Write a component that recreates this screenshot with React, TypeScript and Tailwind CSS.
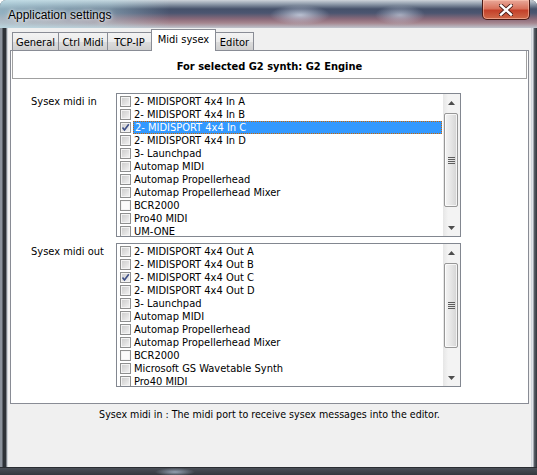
import React from 'react'

const inPorts = [
  '2- MIDISPORT 4x4 In A',
  '2- MIDISPORT 4x4 In B',
  '2- MIDISPORT 4x4 In C',
  '2- MIDISPORT 4x4 In D',
  '3- Launchpad',
  'Automap MIDI',
  'Automap Propellerhead',
  'Automap Propellerhead Mixer',
  'BCR2000',
  'Pro40 MIDI',
  'UM-ONE',
]

const outPorts = [
  '2- MIDISPORT 4x4 Out A',
  '2- MIDISPORT 4x4 Out B',
  '2- MIDISPORT 4x4 Out C',
  '2- MIDISPORT 4x4 Out D',
  '3- Launchpad',
  'Automap MIDI',
  'Automap Propellerhead',
  'Automap Propellerhead Mixer',
  'BCR2000',
  'Microsoft GS Wavetable Synth',
  'Pro40 MIDI',
]

function CheckBox({ checked, light }: { checked: boolean; light: boolean }) {
  return (
    <span
      className={`relative flex h-[11px] w-[11px] shrink-0 items-center justify-center border border-[#8e8f8f] shadow-[inset_0_0_0_1px_#f4f4f4] ${
        light
          ? 'bg-[#fbfbfb]'
          : 'bg-[linear-gradient(135deg,#cbcbcb_0%,#dedede_50%,#f6f6f6_100%)]'
      }`}
    >
      {checked ? (
        <svg viewBox="0 0 9 9" width="9" height="9" aria-hidden="true">
          <path d="M1.5 4.5 L3.5 7 L7.8 1.2" fill="none" stroke="#3d4f86" strokeWidth="1.6" />
        </svg>
      ) : null}
    </span>
  )
}

function Arrow({ up }: { up: boolean }) {
  return (
    <div className="flex h-[17px] items-center justify-center">
      <svg viewBox="0 0 7 4" width="7" height="4" aria-hidden="true">
        <polygon points={up ? '3.5,0 7,4 0,4' : '0,0 7,0 3.5,4'} fill="#4d4d4d" />
      </svg>
    </div>
  )
}

function ScrollBar({ thumb }: { thumb: number }) {
  return (
    <div className="flex w-[17px] shrink-0 flex-col bg-[linear-gradient(to_right,#e6e6e6,#f3f3f3_30%,#f3f3f3)]">
      <Arrow up />
      <div className="flex-1 pl-[1px] pt-[2px]">
        <div
          className={`flex w-[14px] items-center justify-center rounded-[2px] border border-[#979797] bg-[linear-gradient(to_right,#f4f4f4,#e6e6e6_50%,#d4d4d4)] shadow-[inset_0_0_0_1px_rgba(255,255,255,0.7)] ${
            thumb === 94 ? 'h-[94px]' : 'h-[85px]'
          }`}
        >
          <div className="flex flex-col gap-[1px]">
            <span className="block h-[1px] w-[7px] bg-[#5d5d5d]" />
            <span className="block h-[1px] w-[7px] bg-[#5d5d5d]" />
            <span className="block h-[1px] w-[7px] bg-[#5d5d5d]" />
            <span className="block h-[1px] w-[7px] bg-[#5d5d5d]" />
          </div>
        </div>
      </div>
      <Arrow up={false} />
    </div>
  )
}

type PortListProps = {
  items: string[]
  checkedIndex: number
  selectedIndex: number
  thumb: number
}

function PortList({ items, checkedIndex, selectedIndex, thumb }: PortListProps) {
  return (
    <div className="flex h-[144px] w-[345px] border border-[#828790] bg-white">
      <div className="flex-1 overflow-hidden pt-[1px]">
        {items.map((item, i) => (
          <div key={item} className="flex h-[13px] items-center pl-[3px]">
            <CheckBox checked={i === checkedIndex} light={item === 'BCR2000'} />
            <span
              className={`ml-[2px] mr-[1px] flex h-[13px] flex-1 items-center whitespace-nowrap pl-[1px] ${
                i === selectedIndex
                  ? 'border border-dotted border-[#cc6600] bg-[#3399ff] pl-0 text-white'
                  : ''
              }`}
            >
              {item}
            </span>
          </div>
        ))}
      </div>
      <ScrollBar thumb={thumb} />
    </div>
  )
}

function Tab({ label, width, active }: { label: string; width: string; active?: boolean }) {
  if (active) {
    return (
      <div
        className={`relative z-10 -mb-[1px] flex h-[22px] items-start justify-center border border-b-0 border-[#898c95] bg-white pt-[3px] ${width}`}
      >
        {label}
      </div>
    )
  }
  return (
    <div
      className={`flex h-[18px] items-center justify-center border border-b-0 border-[#898c95] bg-[linear-gradient(to_bottom,#f3f3f3,#ebebeb_50%,#dddddd_51%,#cfcfcf)] pt-[1px] ${width}`}
    >
      {label}
    </div>
  )
}

function CloseButton() {
  return (
    <div className="mr-[1px] flex h-[20px] w-[48px] items-center justify-center rounded-b-[5px] border border-t-0 border-[#4a1a14] bg-[linear-gradient(to_bottom,#e9a99a_0%,#d8725c_45%,#c4412a_55%,#cf6a4a_100%)] shadow-[inset_0_0_0_1px_rgba(255,200,180,0.55)]">
      <svg viewBox="0 0 14 12" width="14" height="12" aria-hidden="true">
        <path d="M2 1.5 L12 10.5 M12 1.5 L2 10.5" stroke="#4a1e18" strokeWidth="4.2" strokeLinecap="square" />
        <path d="M2 1.5 L12 10.5 M12 1.5 L2 10.5" stroke="#ffffff" strokeWidth="2.4" strokeLinecap="square" />
      </svg>
    </div>
  )
}

export default function App() {
  return (
    <div className="flex h-[475px] w-[537px] flex-col overflow-hidden rounded-t-[6px] bg-[#3e434a] font-['DejaVu_Sans_Condensed','DejaVu_Sans',sans-serif] text-[11px] leading-[13px] text-black">
      <header className="flex h-[28px] shrink-0 items-start justify-between bg-[radial-gradient(30px_10px_at_300px_15px,rgba(215,225,240,0.75),transparent),radial-gradient(25px_10px_at_400px_15px,rgba(215,225,240,0.6),transparent),linear-gradient(to_right,rgba(185,225,235,0.65)_0px,rgba(185,225,235,0.4)_110px,rgba(185,225,235,0)_170px),linear-gradient(to_bottom,#cdd3da_0px,#909cab_4px,#45516a_9px,#4b5570_13px,#8a6a7a_19px,#a5868f_23px,#bfc4cd_28px)] pl-[8px] pr-[6px]">
        <span className="pt-[8px] font-['Liberation_Sans',Arial,sans-serif] text-[12px] leading-[14px] [text-shadow:0_0_6px_rgba(255,255,255,0.95),0_0_3px_rgba(255,255,255,0.9)]">
          Application settings
        </span>
        <CloseButton />
      </header>

      <div className="flex min-h-0 flex-1">
        <div className="w-[8px] shrink-0 bg-[linear-gradient(to_right,#8b929c_0px,#8b929c_2px,#2e3238_3px,#2e3238_6px,#cfd4da_7px)]" />

        <div className="flex w-[523px] flex-col bg-[#f0f0f0]">
          <div className="flex h-[22px] items-end pl-[4px]">
            <Tab label="General" width="w-[47px]" />
            <Tab label="Ctrl Midi" width="w-[50px] -ml-[1px]" />
            <Tab label="TCP-IP" width="w-[45px] -ml-[1px]" />
            <Tab label="Midi sysex" width="w-[65px] -ml-[1px]" active />
            <Tab label="Editor" width="w-[39px] -ml-[1px]" />
          </div>

          <section className="mx-[2px] flex flex-col border border-[#898c95] bg-white pb-[16px]">
            <div className="mx-[1px] h-[28px] border border-t-0 border-[#a0a0a0] pt-[9px] text-center font-bold">
              For selected G2 synth: G2 Engine
            </div>

            <div className="mt-[14px] flex">
              <div className="w-[105px] pl-[20px] pt-[2px]">Sysex midi in</div>
              <PortList items={inPorts} checkedIndex={2} selectedIndex={2} thumb={94} />
            </div>

            <div className="mt-[6px] flex">
              <div className="w-[105px] pl-[20px] pt-[2px]">Sysex midi out</div>
              <PortList items={outPorts} checkedIndex={2} selectedIndex={-1} thumb={85} />
            </div>
          </section>

          <footer className="flex-1 pt-[4px] text-center text-[10.6px]">
            Sysex midi in : The midi port to receive sysex messages into the editor.
          </footer>
        </div>

        <div className="w-[6px] shrink-0 bg-[linear-gradient(to_right,#c9ced6_0px,#e8ebef_2px,#5d636c_3px,#30343a_6px)]" />
      </div>

      <div className="h-[8px] shrink-0 border-t border-[#2a2d32] bg-[radial-gradient(20px_4px_at_175px_4px,rgba(170,185,205,0.8),transparent),linear-gradient(to_bottom,#4a4f57,#34383e)]" />
    </div>
  )
}
